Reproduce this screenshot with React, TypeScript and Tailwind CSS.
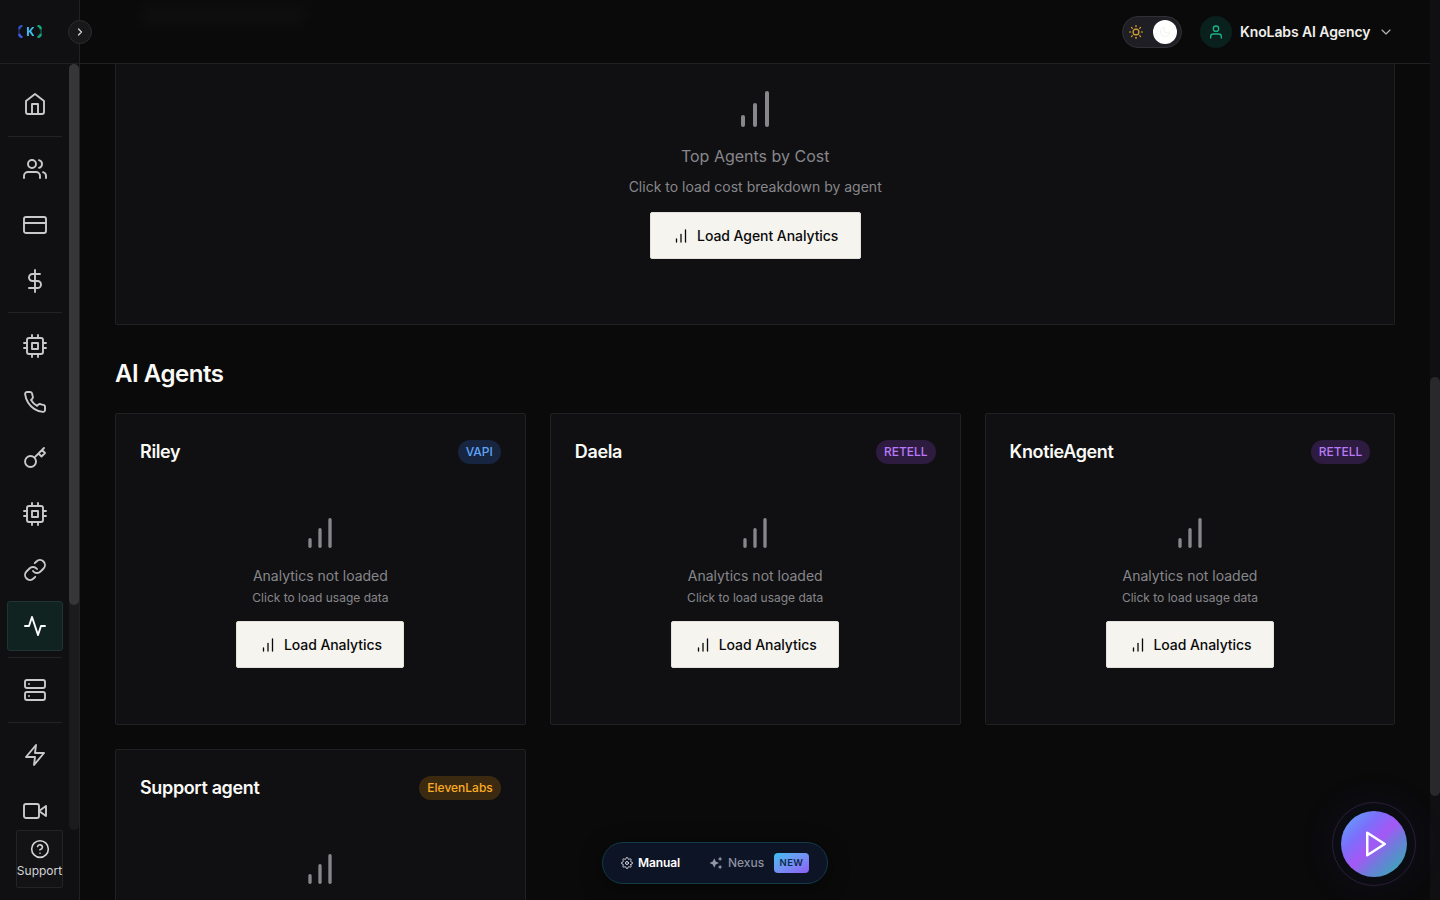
import type { IconType } from 'react-icons'
import {
  FiActivity,
  FiBarChart,
  FiChevronDown,
  FiChevronRight,
  FiCpu,
  FiCreditCard,
  FiDollarSign,
  FiHelpCircle,
  FiHome,
  FiKey,
  FiLink,
  FiMoon,
  FiPhone,
  FiPlay,
  FiServer,
  FiSettings,
  FiSun,
  FiUser,
  FiUsers,
  FiVideo,
  FiZap,
} from 'react-icons/fi'
import { MdAutoAwesome } from 'react-icons/md'
import { clsx } from 'clsx'

type NavItem = { label: string; icon: IconType; active?: boolean }

const NAV_GROUPS: NavItem[][] = [
  [{ label: 'Home', icon: FiHome }],
  [
    { label: 'Clients', icon: FiUsers },
    { label: 'Plans', icon: FiCreditCard },
    { label: 'Billing', icon: FiDollarSign },
  ],
  [
    { label: 'Agents', icon: FiCpu },
    { label: 'Phone numbers', icon: FiPhone },
    { label: 'API keys', icon: FiKey },
    { label: 'Models', icon: FiCpu },
    { label: 'Links', icon: FiLink },
    { label: 'Usage', icon: FiActivity, active: true },
  ],
  [{ label: 'Servers', icon: FiServer }],
  [
    { label: 'Automations', icon: FiZap },
    { label: 'Videos', icon: FiVideo },
  ],
]

type Agent = { name: string; provider: 'VAPI' | 'RETELL' | 'ElevenLabs' }

const AGENTS: Agent[] = [
  { name: 'Riley', provider: 'VAPI' },
  { name: 'Daela', provider: 'RETELL' },
  { name: 'KnotieAgent', provider: 'RETELL' },
  { name: 'Support agent', provider: 'ElevenLabs' },
]

const PROVIDER_STYLES = {
  VAPI: 'bg-[#172540] text-[#60a5fa]',
  RETELL: 'bg-[#2d1b40] text-[#b87af8]',
  ElevenLabs: 'bg-[#3c2a10] text-[#fbac24]',
}

function Logo() {
  return (
    <div className="flex h-4 w-6 items-center justify-between">
      <svg width="5" height="13" viewBox="0 0 5 13" fill="none" strokeWidth="2.2">
        <path d="M4.5 1C2 1 1.2 2.5 1.2 4.5" stroke="#2f55c8" />
        <path d="M1 5v3" stroke="#24398a" strokeWidth="1.2" />
        <path d="M1.2 8.5c0 2 .8 3.5 3.3 3.5" stroke="#3f5fe6" />
      </svg>
      <span className="bg-linear-to-r from-[#4bb4f5] to-[#35c6e8] bg-clip-text font-['Open_Sans',sans-serif] text-[13px] leading-none font-bold text-transparent">
        K
      </span>
      <svg width="5" height="13" viewBox="0 0 5 13" fill="none" strokeWidth="2.2">
        <path d="M.5 1c2.5 0 3.3 1.5 3.3 3.5" stroke="#12b07f" />
        <path d="M4 5v3" stroke="#126b55" strokeWidth="1.2" />
        <path d="M3.8 8.5c0 2-.8 3.5-3.3 3.5" stroke="#17a884" />
      </svg>
    </div>
  )
}

function Sidebar() {
  return (
    <aside className="relative z-20 flex w-20 shrink-0 flex-col border-r border-[#212123] bg-[#101012]">
      <div className="flex h-16 shrink-0 items-center border-b border-[#212123] pl-[18px]">
        <Logo />
      </div>
      <button
        type="button"
        aria-label="Expand sidebar"
        className="absolute top-5 left-[68px] z-30 flex size-6 items-center justify-center rounded-full border border-[#2b2b2e] bg-[#18181b] text-[#d4d4d4]"
      >
        <FiChevronRight size={12} strokeWidth={2.5} />
      </button>

      <div className="flex h-[766px] shrink-0 overflow-hidden">
        <nav className="flex w-[69px] shrink-0 flex-col pt-[15px]">
          {NAV_GROUPS.map((group, i) => (
            <div key={i} className="flex flex-col">
              {i > 0 && <div className="mt-[6.5px] mb-[7.3px] ml-2 h-px w-[54px] bg-[#232325]" />}
              <div className="ml-[7px] flex flex-col gap-1.5">
                {group.map(({ label, icon: Icon, active }) => (
                  <button
                    key={label}
                    type="button"
                    aria-label={label}
                    className={clsx(
                      'flex h-[50px] w-14 items-center justify-center rounded-[3px] border',
                      active ? 'border-[#1f3533] bg-[#102321] text-white' : 'border-transparent text-[#c9c9cb]'
                    )}
                  >
                    <Icon size={24} strokeWidth={1.9} />
                  </button>
                ))}
              </div>
            </div>
          ))}
        </nav>
        <div className="ml-auto w-2.5 rounded-full bg-[#1b1b1d]">
          <div className="h-[541px] rounded-full bg-[#363638]" />
        </div>
      </div>

      <button
        type="button"
        className="ml-4 flex h-[58px] w-[47px] flex-col items-center gap-1 rounded-[2px] border border-[#242427] bg-[#131316] pt-2 text-[#d4d4d6]"
      >
        <FiHelpCircle size={20} strokeWidth={1.9} className="shrink-0" />
        <span className="text-xs">Support</span>
      </button>
    </aside>
  )
}

function Header() {
  return (
    <header className="relative flex h-16 shrink-0 items-center justify-end border-b border-[#212123] bg-[#0a0a0a] pr-9">
      {/* page title scrolled under the frosted bar */}
      <div className="absolute top-1 left-[60px] h-[22px] w-[166px] bg-white/[0.025] blur-[8px]" />
      <div className="relative flex h-8 w-[60px] items-center justify-between rounded-full border border-[#303035] bg-[#1e1e24] pr-1 pl-1.5">
        <FiSun size={14} className="text-[#e0a72e]" />
        <div className="flex size-6 items-center justify-center rounded-full bg-white">
          <FiMoon size={12} className="text-[#f3f3f1]" />
        </div>
      </div>
      <div className="ml-[18px] flex size-8 items-center justify-center rounded-full bg-[#0a201d] text-[#1fae8b]">
        <FiUser size={16} />
      </div>
      <span className="ml-2 text-sm font-semibold tracking-[-0.1px] text-[#f0efec]">KnoLabs AI Agency</span>
      <FiChevronDown size={16} strokeWidth={1.75} className="ml-2 text-[#b5b5b8]" />
    </header>
  )
}

function LoadButton({ label }: { label: string }) {
  return (
    <button
      type="button"
      className="flex h-[47px] items-center gap-[7px] rounded-[2px] border border-[#e2e1dc] bg-[#f5f4ef] px-[21.5px] text-sm font-medium tracking-[-0.07px] text-[#0a0a0a]"
    >
      <FiBarChart size={18} strokeWidth={1.75} />
      {label}
    </button>
  )
}

function AgentCard({ agent }: { agent: Agent }) {
  return (
    <article className="h-[312px] rounded-[2px] border border-[#212123] bg-[#101012] px-6 pt-[26px]">
      <div className="flex h-6 items-center justify-between">
        <h3 className="text-lg font-semibold tracking-[-0.36px] text-[#fafaf7]">{agent.name}</h3>
        <span
          className={clsx(
            'flex h-6 items-center rounded-full px-2 text-xs font-medium',
            PROVIDER_STYLES[agent.provider]
          )}
        >
          {agent.provider}
        </span>
      </div>
      <div className="flex flex-col items-center pt-[49px]">
        <FiBarChart size={40} className="text-[#87878b]" />
        <p className="mt-3 text-sm leading-[21px] text-[#87878b]">Analytics not loaded</p>
        <p className="mt-[3px] mb-[14px] text-xs leading-[18px] text-[#87878b]">Click to load usage data</p>
        <LoadButton label="Load Analytics" />
      </div>
    </article>
  )
}

function ModeSwitcher() {
  return (
    <div className="absolute top-[842px] left-[602px] z-20 flex h-[42px] w-[226px] items-center rounded-full border border-[#123a47] bg-[#0c1426] pl-[18px] shadow-[0_4px_20px_rgba(0,0,0,0.5)]">
      <FiSettings size={12} className="text-[#d7d9de]" />
      <span className="ml-[5px] w-[43px] text-xs font-semibold tracking-[-0.1px] text-white">Manual</span>
      <MdAutoAwesome size={14} className="ml-7 text-[#9499a6]" />
      <span className="ml-[5px] w-[37px] text-xs font-medium text-[#8b90a0]">Nexus</span>
      <span className="ml-[9px] flex h-5 w-[35px] items-center justify-center rounded-[4px] bg-linear-to-br from-[#32bdf0] to-[#8b5cf6] text-[9.5px] font-semibold tracking-[0.4px] text-[#0d2a4d]">
        NEW
      </span>
    </div>
  )
}

function PlayFab() {
  return (
    <div className="absolute top-[802px] left-[1332px] z-20 flex size-[84px] items-center justify-center rounded-full border border-[#2b1c3b] bg-[#0b0b12] shadow-[0_0_40px_rgba(99,80,246,0.08)]">
      <button
        type="button"
        aria-label="Play"
        className="flex size-[66px] items-center justify-center rounded-full bg-[linear-gradient(135deg,#62a4f8_5%,#7a70fb_30%,#a458f5_50%,#6a7fd8_68%,#2fb0b0_95%)] text-white"
      >
        <FiPlay size={30} strokeWidth={2} className="ml-1" />
      </button>
    </div>
  )
}

export default function App() {
  return (
    <div className="relative flex h-[900px] w-[1440px] overflow-hidden bg-[#0a0a0a] font-[Inter,sans-serif]">
      <Sidebar />
      <div className="flex w-[1350.4px] shrink-0 flex-col">
        <Header />
        <main className="h-[836px] overflow-hidden px-[35px]">
          <section className="flex h-[261px] flex-col items-center rounded-b-[2px] border border-t-0 border-[#212123] bg-[#101012] pt-[21px]">
            <FiBarChart size={48} className="text-[#87878b]" />
            <h3 className="mt-[11px] text-base leading-6 text-[#87878b]">Top Agents by Cost</h3>
            <p className="mt-2 mb-[15px] text-sm leading-[21px] text-[#87878b]">Click to load cost breakdown by agent</p>
            <LoadButton label="Load Agent Analytics" />
          </section>

          <h2 className="mt-[31px] text-2xl leading-9 font-semibold tracking-[-0.46px] text-[#fafaf7]">AI Agents</h2>
          <div className="mt-[21px] grid grid-cols-3 gap-6">
            {AGENTS.map((agent) => (
              <AgentCard key={agent.name} agent={agent} />
            ))}
          </div>
        </main>
      </div>
      <div className="w-2.5 shrink-0 bg-[#101012] pt-[377px]">
        <div className="h-[419px] rounded-full bg-[#29292b]" />
      </div>
      <ModeSwitcher />
      <PlayFab />
    </div>
  )
}
